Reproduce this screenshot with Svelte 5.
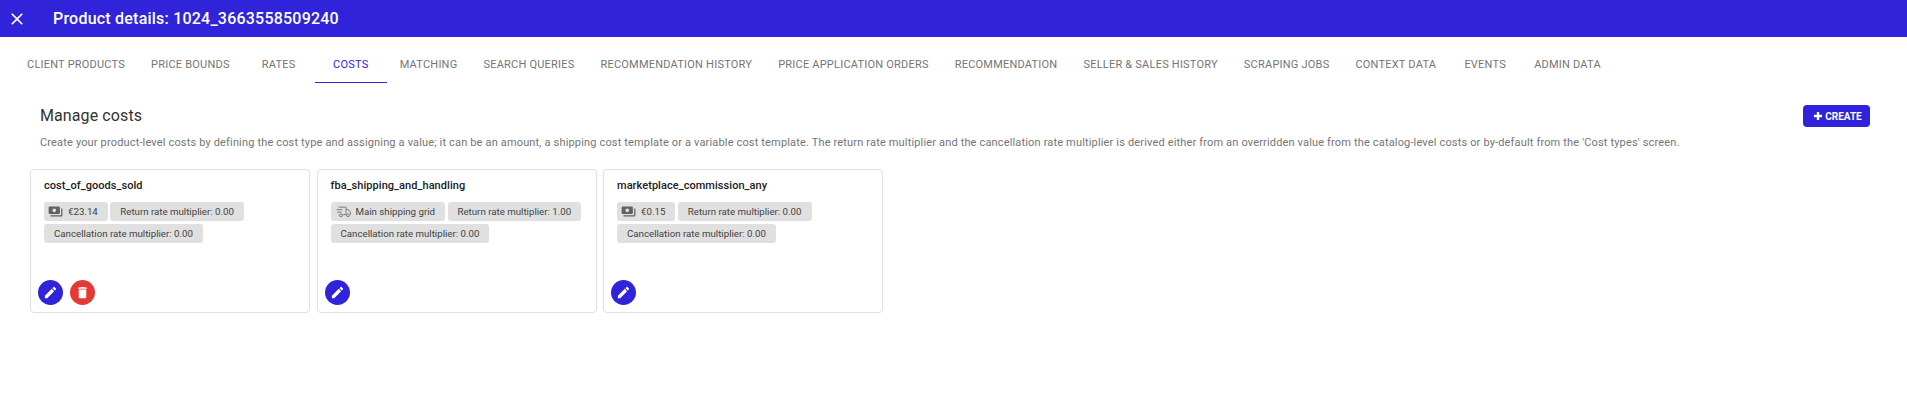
<script>
  const tabs = ['CLIENT PRODUCTS','PRICE BOUNDS','RATES','COSTS','MATCHING','SEARCH QUERIES','RECOMMENDATION HISTORY','PRICE APPLICATION ORDERS','RECOMMENDATION','SELLER & SALES HISTORY','SCRAPING JOBS','CONTEXT DATA','EVENTS','ADMIN DATA'];
  const cards = [
    { name:'cost_of_goods_sold', icon:'money', value:'€23.14', del:true, r:'0.00' },
    { name:'fba_shipping_and_handling', icon:'truck', value:'Main shipping grid', r:'1.00', del:false },
    { name:'marketplace_commission_any', icon:'money', value:'€0.15', r:'0.00', del:false }
  ];
</script>

<div class="page">
  <header class="bar">
    <svg class="close" viewBox="0 0 24 24" width="20" height="20"><path fill="#fff" d="M19 6.41 17.59 5 12 10.59 6.41 5 5 6.41 10.59 12 5 17.59 6.41 19 12 13.41 17.59 19 19 17.59 13.41 12z"/></svg>
    <h1>Product details: 1024_3663558509240</h1>
  </header>
  <nav class="tabs">
    {#each tabs as t}
      <div class="tab" class:active={t === 'COSTS'}>{t}</div>
    {/each}
  </nav>
  <main class="content">
    <div class="head">
      <h2>Manage costs</h2>
      <button class="create">
        <svg viewBox="0 0 24 24" width="14" height="14"><path fill="#fff" d="M19 14h-5v5h-4v-5H5v-4h5V5h4v5h5z"/></svg>
        CREATE
      </button>
    </div>
    <p class="desc">Create your product-level costs by defining the cost type and assigning a value; it can be an amount, a shipping cost template or a variable cost template. The return rate multiplier and the cancellation rate multiplier is derived either from an overridden value from the catalog-level costs or by-default from the 'Cost types' screen.</p>
  </main>
  <section class="cards">
    {#each cards as c}
      <article class="card">
        <h3>{c.name}</h3>
        <div class="chips">
          <span class="chip lead" class:truck={c.icon === 'truck'}>
            {#if c.icon === 'money'}
              <svg viewBox="0 0 24 24" width="15" height="15"><path fill="#616161" d="M19 14V6c0-1.1-.9-2-2-2H3c-1.1 0-2 .9-2 2v8c0 1.1.9 2 2 2h14c1.1 0 2-.9 2-2zm-9-1c-1.66 0-3-1.34-3-3s1.34-3 3-3 3 1.34 3 3-1.34 3-3 3zm13-6v11c0 1.1-.9 2-2 2H4v-2h17V7h2z"/></svg>
            {:else}
              <svg viewBox="0 0 24 24" width="15" height="15" fill="none" stroke="#757575" stroke-width="1.5"><path d="M4 5h12v12h-5M16 9h4l3 4v4h-1M16 17h0M1 9h9M2 13h7M4 17h1"/><circle cx="8" cy="18" r="2.2"/><circle cx="19" cy="18" r="2.2"/></svg>
            {/if}
            {c.value}
          </span>
          <span class="chip">Return rate multiplier: {c.r}</span>
          <span class="chip">Cancellation rate multiplier: 0.00</span>
        </div>
        <div class="actions">
          <button class="round edit" aria-label="edit">
            <svg viewBox="0 0 24 24" width="15" height="15"><path fill="#fff" d="M3 17.25V21h3.75L17.81 9.94l-3.75-3.75L3 17.25zM20.71 7.04a1 1 0 0 0 0-1.41l-2.34-2.34a1 1 0 0 0-1.41 0l-1.83 1.83 3.75 3.75 1.83-1.83z"/></svg>
          </button>
          {#if c.del}
            <button class="round del" aria-label="delete">
              <svg viewBox="0 0 24 24" width="15" height="15"><path fill="#fff" d="M6 19c0 1.1.9 2 2 2h8c1.1 0 2-.9 2-2V7H6v12zM19 4h-3.5l-1-1h-5l-1 1H5v2h14V4z"/></svg>
            </button>
          {/if}
        </div>
      </article>
    {/each}
  </section>
</div>

<style>
  :global(body) { margin: 0; background: #fff; }
  .page { font-family: Roboto, sans-serif; width: 1907px; height: 412px; overflow: hidden; color: #212121; }
  .bar { height: 37px; background: #3023d9; display: flex; align-items: center; box-sizing: border-box; padding-left: 7px; }
  .close { flex: none; }
  h1 { margin: 0 0 0 26px; font-size: 16px; font-weight: 500; color: #fff; line-height: 1; letter-spacing: .22px; }
  .tabs { display: flex; padding: 9px 0 0 14px; height: 37px; }
  .tab { min-width: 72px; box-sizing: border-box; padding: 0 13px; height: 37px; display: flex; align-items: center; justify-content: center; font-size: 11px; font-weight: 400; color: #757575; white-space: nowrap; letter-spacing: .22px; }
  .tab.active { color: #3023d9; border-bottom: 1px solid #3023d9; }
  .content { padding: 23px 37px 0 40px; }
  .head { display: flex; justify-content: space-between; align-items: flex-start; }
  h2 { margin: 0; font-size: 16px; font-weight: 400; line-height: 20px; color: #333; letter-spacing: .1px; }
  .create { width: 67px; height: 22px; border: 0; border-radius: 4px; background: #3023d9; color: #fff; font: 700 10px Roboto, sans-serif; display: flex; align-items: center; justify-content: center; gap: 0; padding: 0; margin-top: -1px; }
  .desc { margin: 7px 0 0; font-size: 11px; line-height: 18px; color: #757575; white-space: nowrap; letter-spacing: .16px; }
  .cards { display: flex; gap: 6.5px; padding: 0 0 0 30px; margin-top: 17px; }
  .card { width: 280px; height: 144px; box-sizing: border-box; border: 1px solid #e0e0e0; border-radius: 4px; padding: 8px 7px 7px; display: flex; flex-direction: column; }
  h3 { margin: 0 0 0 6px; font-size: 11px; font-weight: 500; line-height: 16px; color: #212121; letter-spacing: .05px; }
  .chips { display: flex; flex-wrap: wrap; gap: 3px 2.5px; margin: 8px 0 0 6px; }
  .chip { height: 19px; border-radius: 3px; background: #e0e0e0; font-size: 9.7px; line-height: 19px; padding: 0 10px; color: #424242; display: inline-flex; align-items: center; gap: 5px; white-space: nowrap; }
  .chip.lead { padding-left: 4px; }
  .chip.lead.truck { padding-left: 5px; }
  .actions { margin-top: auto; display: flex; gap: 7px; }
  .round { width: 25px; height: 25px; border-radius: 50%; border: 0; padding: 0; display: flex; align-items: center; justify-content: center; }
  .edit { background: #3023d9; }
  .del { background: #e53935; }
</style>
